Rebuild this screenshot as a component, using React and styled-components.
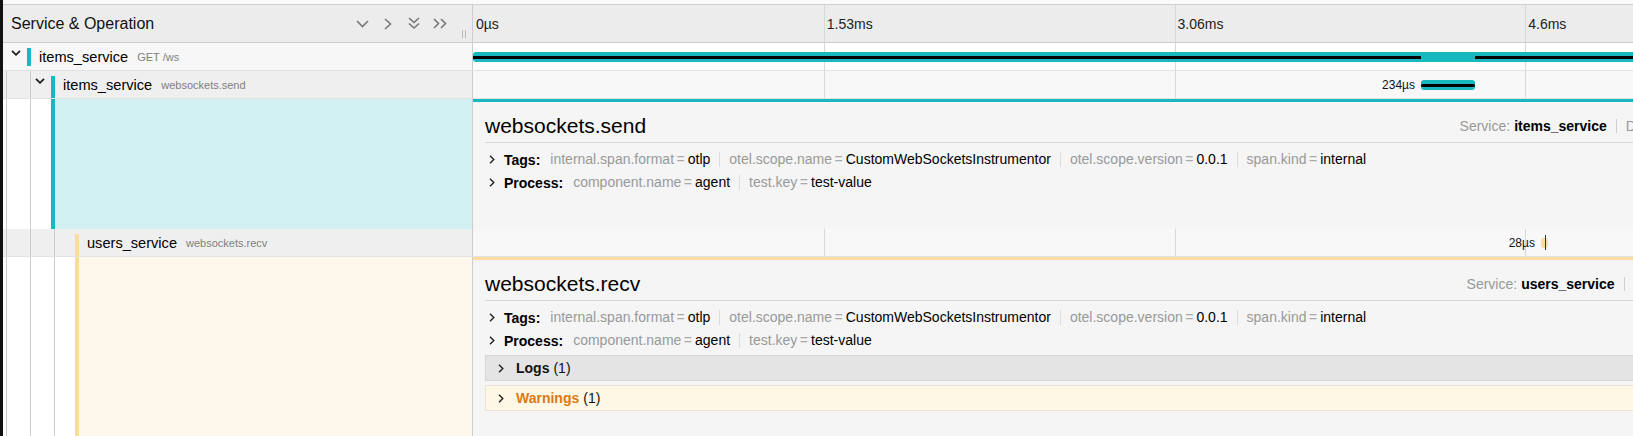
import React from 'react';
import styled, { createGlobalStyle } from 'styled-components';

const TEAL = '#17b8be';
const YELLOW = '#f8dca1';
const TOTAL_US = 6130;
const TICKS = ['0µs', '1.53ms', '3.06ms', '4.6ms'];

const pct = (us) => (us / TOTAL_US) * 100;

const GlobalStyle = createGlobalStyle`
  * { box-sizing: border-box; }
  html, body { margin: 0; padding: 0; overflow: hidden; background: #fff; }
  body {
    font-family: "Liberation Sans", Arial, Helvetica, sans-serif;
    font-size: 14px;
    color: #000;
  }
`;

const Page = styled.div`
  width: 1876px;
  height: 436px;
  overflow: hidden;
  border-left: 3px solid #111;
  background: #fff;
`;

const TopStrip = styled.div`
  height: 4px;
  background: #fafafa;
`;

const Row = styled.div`
  display: flex;
  height: ${(p) => (p.$auto ? 'auto' : '28px')};
  border-bottom: ${(p) => (p.$auto ? 'none' : '1px solid #e2e2e2')};
`;

const HeaderRow = styled.div`
  display: flex;
  height: 39px;
  border-top: 1px solid #d0d0d0;
  border-bottom: 1px solid #cccccc;
  background: #ececec;
`;

const NameCol = styled.div`
  width: 470px;
  flex-shrink: 0;
  display: flex;
  align-items: center;
  border-right: 1px solid #cdcdcd;
  background: ${(p) => p.$bg || 'transparent'};
`;

const HeaderName = styled(NameCol)`
  padding-left: 8px;
`;

const ViewCol = styled.div`
  position: relative;
  flex: 1;
  background: ${(p) => p.$bg || 'transparent'};
`;

const HeaderTitle = styled.div`
  flex: 1;
  font-size: 16px;
  color: #111;
`;

const IconGroup = styled.div`
  display: flex;
  align-items: center;
`;

const IconButton = styled.span`
  width: 26px;
  height: 20px;
  display: flex;
  align-items: center;
  justify-content: center;
  color: #777;
`;

const Grip = styled.span`
  align-self: flex-end;
  width: 4px;
  height: 8px;
  margin: 0 6px 4px 9px;
  border-left: 1px solid #bdbdbd;
  border-right: 1px solid #bdbdbd;
`;

const Tick = styled.div`
  position: absolute;
  top: 0;
  bottom: 0;
  width: 1px;
  background: #d8d8d8;
`;

const TickLabel = styled.div`
  position: absolute;
  top: 0;
  bottom: 0;
  padding-left: 3px;
  display: flex;
  align-items: center;
  font-size: 14px;
  color: #222;
  white-space: nowrap;
`;

const Guide = styled.span`
  width: 24px;
  height: 100%;
  flex-shrink: 0;
  align-self: stretch;
  display: flex;
  align-items: center;
  justify-content: center;
  padding-left: 2px;
  background: ${(p) =>
    p.$line ? 'linear-gradient(#cccccc, #cccccc) 3px 0 / 1px 100% no-repeat' : 'none'};
`;

const ToggleIcon = styled.svg`
  margin-bottom: 8px;
`;

const ColorBar = styled.span`
  width: 4px;
  flex-shrink: 0;
  align-self: stretch;
  margin-top: ${(p) => (p.$flush ? 0 : 5)}px;
  margin-bottom: ${(p) => (p.$open ? 0 : 4)}px;
  background: ${(p) => p.$color};
`;

const SvcName = styled.span`
  margin-left: 8px;
  font-size: 14.6px;
  color: #000;
  white-space: nowrap;
`;

const OpName = styled.span`
  margin-left: 9px;
  font-size: 11px;
  color: #808080;
  white-space: nowrap;
`;

const Accent = styled.div`
  flex: 1;
  align-self: stretch;
  background: ${(p) => p.$bg};
`;

const Bar = styled.div`
  position: absolute;
  top: 9px;
  height: 10px;
  min-width: 7px;
  border-radius: 3px;
  background: ${(p) => p.$color};
`;

const Critical = styled.div`
  position: absolute;
  top: 13px;
  height: 3px;
  background: #000;
  border-radius: ${(p) => (p.$round ? '2px' : '0')};
`;

const Marker = styled.div`
  position: absolute;
  top: 6px;
  height: 15px;
  width: 1px;
  background: #333;
`;

const BarLabel = styled.span`
  position: absolute;
  top: 0;
  height: 100%;
  display: flex;
  align-items: center;
  font-size: 12px;
  color: #111;
  white-space: nowrap;
`;

const Detail = styled.div`
  flex: 1;
  background: #f5f5f5;
  border-top: 3px solid ${(p) => p.$color};
  padding: 8px 12px 8px 12px;
`;

const DetailHeader = styled.div`
  display: flex;
  align-items: center;
  justify-content: space-between;
  height: 33px;
  border-bottom: 1px solid #d6d6d6;
`;

const DetailTitle = styled.h2`
  margin: 0;
  font-size: 21px;
  font-weight: normal;
  color: #000;
  white-space: nowrap;
`;

const Overview = styled.div`
  display: flex;
  align-items: center;
  white-space: nowrap;
  font-size: 14px;
`;

const OvLabel = styled.span`
  color: #999;
  margin-right: 4px;
`;

const OvValue = styled.strong`
  color: #000;
`;

const OvSep = styled.span`
  width: 1px;
  height: 14px;
  margin: 0 9px;
  background: #cfcfcf;
`;

const Sections = styled.div`
  padding-top: 5px;
`;

const KVRow = styled.div`
  display: flex;
  align-items: center;
  height: 23px;
  padding-left: 4px;
  white-space: nowrap;
`;

const KVLabel = styled.strong`
  margin: 0 10px 0 9px;
`;

const KVItem = styled.span`
  display: inline-flex;
  align-items: center;
  line-height: 15px;
  & + & {
    border-left: 1px solid #dcdcdc;
    margin-left: 9px;
    padding-left: 9px;
  }
`;

const KVKey = styled.span`
  color: #999;
`;

const KVEq = styled.span`
  color: #aaa;
  margin: 0 3px 0 2.5px;
`;

const Accordion = styled.div`
  display: flex;
  align-items: center;
  height: 26px;
  margin-top: ${(p) => p.$mt}px;
  padding-left: 12px;
  background: ${(p) => (p.$warn ? '#fff7e6' : '#e4e4e4')};
  border: 1px solid ${(p) => (p.$warn ? '#ebe3d3' : '#d6d6d6')};
`;

const AccTitle = styled.span`
  margin-left: 12px;
  font-weight: bold;
  color: ${(p) => (p.$warn ? '#dc7a12' : '#111')};
`;

const AccCount = styled.span`
  margin-left: 4px;
  color: #111;
`;

const Footer = styled.div`
  margin-top: 4px;
  height: 23px;
  text-align: right;
  font-size: 12px;
  color: #999;
`;

const IconDown = () => (
  <svg width="13" height="8" viewBox="0 0 13 8">
    <polyline points="1,1 6.5,6.5 12,1" fill="none" stroke="currentColor" strokeWidth="1.6" />
  </svg>
);
const IconRight = () => (
  <svg width="8" height="12" viewBox="0 0 8 12">
    <polyline points="1,1 6.5,6 1,11" fill="none" stroke="currentColor" strokeWidth="1.6" />
  </svg>
);
const IconDoubleDown = () => (
  <svg width="12" height="13" viewBox="0 0 12 13">
    <polyline points="1,1 6,5.5 11,1" fill="none" stroke="currentColor" strokeWidth="1.6" />
    <polyline points="1,6.5 6,11 11,6.5" fill="none" stroke="currentColor" strokeWidth="1.6" />
  </svg>
);
const IconDoubleRight = () => (
  <svg width="15" height="11" viewBox="0 0 15 11">
    <polyline points="1,1 5.5,5.5 1,10" fill="none" stroke="currentColor" strokeWidth="1.6" />
    <polyline points="8,1 12.5,5.5 8,10" fill="none" stroke="currentColor" strokeWidth="1.6" />
  </svg>
);

const RowChevron = () => (
  <ToggleIcon width="10" height="6" viewBox="0 0 10 6">
    <polyline points="1,0.8 5,4.8 9,0.8" fill="none" stroke="#222" strokeWidth="1.8" />
  </ToggleIcon>
);

const SmallChevron = () => (
  <svg width="6" height="9" viewBox="0 0 6 9">
    <polyline points="1,0.8 4.8,4.5 1,8.2" fill="none" stroke="#222" strokeWidth="1.4" />
  </svg>
);

const tags = [
  ['internal.span.format', 'otlp'],
  ['otel.scope.name', 'CustomWebSocketsInstrumentor'],
  ['otel.scope.version', '0.0.1'],
  ['span.kind', 'internal'],
];
const processTags = [
  ['component.name', 'agent'],
  ['test.key', 'test-value'],
];

const spans = [
  {
    id: 'root',
    depth: 0,
    service: 'items_service',
    op: 'GET /ws',
    color: TEAL,
    start: 0,
    duration: TOTAL_US,
    hasChildren: true,
    critical: [[0, 4142], [4376, TOTAL_US]],
    rowBg: '#f7f7f7',
    viewBg: '#fff',
  },
  {
    id: 'send',
    depth: 1,
    service: 'items_service',
    op: 'websockets.send',
    color: TEAL,
    accent: '#d1f0f1',
    start: 4142,
    duration: 234,
    label: '234µs',
    hasChildren: true,
    critical: [[4142, 4376]],
    open: true,
    rowBg: '#efefef',
    viewBg: '#f8f8f8',
    startLabel: '4.14ms',
  },
  {
    id: 'recv',
    depth: 2,
    service: 'users_service',
    op: 'websockets.recv',
    color: YELLOW,
    accent: '#fef7eb',
    start: 4666,
    duration: 28,
    label: '28µs',
    marker: true,
    open: true,
    logs: true,
    rowBg: '#efefef',
    viewBg: '#f8f8f8',
    startLabel: '4.67ms',
  },
];

const Ticks = () =>
  [25, 50, 75].map((p) => <Tick key={p} style={{ left: `${p}%` }} />);

const Guides = ({ count }) =>
  Array.from({ length: count }, (_, i) => <Guide key={i} $line />);

const KVList = ({ label, items }) => (
  <KVRow>
    <SmallChevron />
    <KVLabel>{label}:</KVLabel>
    {items.map(([k, v]) => (
      <KVItem key={k}>
        <KVKey>{k}</KVKey>
        <KVEq>=</KVEq>
        <span>{v}</span>
      </KVItem>
    ))}
  </KVRow>
);

const SpanRow = ({ span }) => (
  <Row>
    <NameCol $bg={span.rowBg}>
      <Guides count={span.depth} />
      <Guide $line={span.depth > 0}>{span.hasChildren && <RowChevron />}</Guide>
      <ColorBar $color={span.color} $open={span.open} />
      <SvcName>{span.service}</SvcName>
      <OpName>{span.op}</OpName>
    </NameCol>
    <ViewCol $bg={span.viewBg}>
      <Ticks />
      {span.label && (
        <BarLabel style={{ right: `calc(${100 - pct(span.start)}% + 6px)` }}>{span.label}</BarLabel>
      )}
      <Bar
        $color={span.color}
        style={{ left: `${pct(span.start)}%`, width: `${pct(span.duration)}%` }}
      />
      {(span.critical || []).map(([a, b]) => (
        <Critical
          key={a}
          $round={span.depth > 0}
          style={{ left: `${pct(a)}%`, width: `${pct(b - a)}%` }}
        />
      ))}
      {span.marker && (
        <Marker style={{ left: `calc(${pct(span.start + span.duration / 2)}% + 1px)` }} />
      )}
    </ViewCol>
  </Row>
);

const DetailRow = ({ span }) => (
  <Row $auto>
    <NameCol>
      <Guides count={span.depth + 1} />
      <ColorBar $color={span.color} $flush $open />
      <Accent $bg={span.accent} />
    </NameCol>
    <Detail $color={span.color}>
      <DetailHeader>
        <DetailTitle>{span.op}</DetailTitle>
        <Overview>
          <OvLabel>Service:</OvLabel>
          <OvValue>{span.service}</OvValue>
          <OvSep />
          <OvLabel>Duration:</OvLabel>
          <OvValue>{span.label}</OvValue>
          <OvSep />
          <OvLabel>Start Time:</OvLabel>
          <OvValue>{span.startLabel}</OvValue>
        </Overview>
      </DetailHeader>
      <Sections>
        <KVList label="Tags" items={tags} />
        <KVList label="Process" items={processTags} />
        {span.logs && (
          <>
            <Accordion $mt={3}>
              <SmallChevron />
              <AccTitle>Logs</AccTitle>
              <AccCount>(1)</AccCount>
            </Accordion>
            <Accordion $mt={4} $warn>
              <SmallChevron />
              <AccTitle $warn>Warnings</AccTitle>
              <AccCount>(1)</AccCount>
            </Accordion>
          </>
        )}
      </Sections>
      <Footer>SpanID: {span.id === 'send' ? '5a1c9e3f7b2d4086' : '8e4f20b1c6d93a75'}</Footer>
    </Detail>
  </Row>
);

const App = () => (
  <>
    <GlobalStyle />
    <Page>
      <TopStrip />
      <HeaderRow>
        <HeaderName>
          <HeaderTitle>Service &amp; Operation</HeaderTitle>
          <IconGroup>
            <IconButton><IconDown /></IconButton>
            <IconButton><IconRight /></IconButton>
            <IconButton><IconDoubleDown /></IconButton>
            <IconButton><IconDoubleRight /></IconButton>
          </IconGroup>
          <Grip />
        </HeaderName>
        <ViewCol>
          <Ticks />
          {TICKS.map((t, i) => (
            <TickLabel key={t} style={{ left: `${i * 25}%` }}>{t}</TickLabel>
          ))}
        </ViewCol>
      </HeaderRow>
      {spans.map((s) => (
        <React.Fragment key={s.id}>
          <SpanRow span={s} />
          {s.open && <DetailRow span={s} />}
        </React.Fragment>
      ))}
    </Page>
  </>
);

export default App;
